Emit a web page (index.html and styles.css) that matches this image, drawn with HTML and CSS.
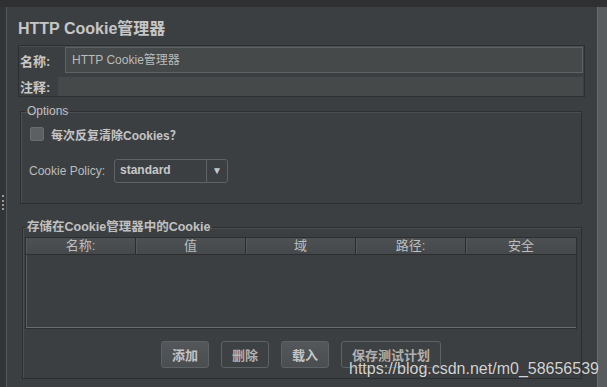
FILE: index.html
```html
<!DOCTYPE html>
<html lang="zh">
<head>
    <meta charset="UTF-8" />
    <title>HTTP Cookie管理器</title>
    <link rel="stylesheet" href="styles.css">
</head>
<body>

    <div class="top-bar"></div>

    <div class="workspace">
        <div class="side">
            <div class="grip"></div>
        </div>

        <div class="panel">
            <div class="title">HTTP Cookie管理器</div>

            <div class="name-box">
                <div class="row">
                    <span class="label label-name">名称:</span>
                    <div class="field field-name">HTTP Cookie管理器</div>
                </div>
                <div class="row">
                    <span class="label label-comment">注释:</span>
                    <div class="field field-comment"></div>
                </div>
            </div>

            <fieldset class="group options">
                <legend>Options</legend>
                <div class="check-row">
                    <span class="checkbox"></span>
                    <span class="check-text">每次反复清除Cookies？</span>
                </div>
                <div class="policy-row">
                    <span class="policy-label">Cookie Policy:</span>
                    <div class="combo">
                        <span class="combo-value">standard</span>
                        <span class="combo-arrow">▼</span>
                    </div>
                </div>
            </fieldset>

            <fieldset class="group cookies">
                <legend>存储在Cookie管理器中的Cookie</legend>
                <div class="table">
                    <div class="thead">
                        <div class="th">名称:</div>
                        <div class="th">值</div>
                        <div class="th">域</div>
                        <div class="th">路径:</div>
                        <div class="th">安全</div>
                    </div>
                    <div class="tbody"></div>
                </div>
                <div class="buttons">
                    <button class="btn">添加</button>
                    <button class="btn btn-flat">删除</button>
                    <button class="btn">载入</button>
                    <button class="btn btn-flat">保存测试计划</button>
                </div>
            </fieldset>
        </div>

        <div class="scroll"></div>
    </div>

    <div class="watermark">https://blog.csdn.net/m0_58656539</div>

</body>
</html>
```

FILE: styles.css
```css
html, body {
    margin: 0;
    height: 100%;
    overflow: hidden;
}

body {
    position: relative;
    background: #3c3f41;
    color: #bbbbbb;
    font-family: "Liberation Sans", "Noto Sans CJK SC", sans-serif;
    font-size: 12px;
}

.top-bar {
    height: 7px;
    background: #2e3031;
}

.workspace {
    display: flex;
    height: 380px;
}

.side {
    width: 6px;
    background: #323436;
    border-right: 1px solid #55585a;
}

.grip {
    margin-top: 188px;
    margin-left: 2px;
    height: 15px;
    border-left: 2px dotted #9a9a9a;
}

.panel {
    flex: 1;
    background: #3c3f41;
}

.scroll {
    width: 9px;
    background: #595c5e;
    border-left: 1px solid #6a6d6f;
}

/* title */

.title {
    margin: 12px 0 0 11px;
    font-size: 16px;
    line-height: 20px;
    font-weight: bold;
    color: #c6c6c6;
}

/* name / comment */

.name-box {
    margin: 6px 12px 0 11px;
    padding: 1px 1px 0 0;
    border: 1px solid #2c2e2f;
    box-shadow: inset 0 1px 0 #4a4d4f;
    display: flex;
    flex-direction: column;
    gap: 4px;
}

.row {
    display: flex;
    align-items: center;
}

.label {
    font-size: 13px;
    font-weight: bold;
    color: #c8c8c8;
    padding-left: 1px;
}

.label-name { width: 45px; }
.label-comment { width: 38px; }

.field {
    flex: 1;
    background: #45494a;
    box-sizing: border-box;
}

.field-name {
    height: 26px;
    line-height: 24px;
    padding-left: 6px;
    border: 1px solid #5f6264;
    color: #bbbbbb;
}

.field-comment {
    height: 19px;
}

/* groups */

.group {
    margin: 0;
    padding: 0;
    border: 1px solid #2c2e2f;
    box-shadow: inset 1px 1px 0 #4c4f51;
    min-width: 0;
}

.group legend {
    padding: 0 2px;
    line-height: 14px;
    color: #c0c0c0;
}

.options {
    margin: 7px 15px 0 13px;
    padding: 6px 0 20px 8px;
}

.options legend {
    margin-left: -4px;
    font-size: 12px;
}

.check-row {
    display: flex;
    align-items: center;
    height: 20px;
}

.checkbox {
    width: 12px;
    height: 12px;
    margin-left: 1px;
    background: #5d6062;
    border: 1px solid #6b6e70;
    border-radius: 2px;
}

.check-text {
    margin-left: 7px;
    font-weight: bold;
    color: #c4c4c4;
}

.policy-row {
    display: flex;
    align-items: center;
    margin-top: 15px;
}

.policy-label {
    width: 85px;
}

.combo {
    display: flex;
    width: 114px;
    height: 24px;
    box-sizing: border-box;
    border: 1px solid #606365;
    border-radius: 3px;
}

.combo-value {
    flex: 1;
    padding-left: 5px;
    line-height: 20px;
    font-weight: bold;
    color: #c8c8c8;
}

.combo-arrow {
    width: 20px;
    border-left: 1px solid #606365;
    text-align: center;
    line-height: 22px;
    font-size: 10px;
    color: #c8c8c8;
}

.cookies {
    margin: 15px 15px 0 15px;
    padding: 2px 4px 10px 2px;
}

.cookies legend {
    margin-left: 0;
    font-size: 12.5px;
    line-height: 16px;
    font-weight: bold;
}

/* table */

.table {
    border: 1px solid #2c2e2f;
}

.thead {
    display: grid;
    grid-template-columns: repeat(5, 1fr);
    height: 16px;
    background: linear-gradient(#4d5153, #45494b);
    border-bottom: 1px solid #2c2e2f;
}

.th {
    line-height: 16px;
    text-align: center;
    font-size: 13px;
    color: #bdbdbd;
    border-right: 1px solid #2a2c2d;
    box-shadow: inset 1px 0 0 #55595b;
}

.th:last-child {
    border-right: none;
}

.tbody {
    height: 72px;
    background: #3c3f41;
    border-left: 1px solid #5a5d5f;
    border-bottom: 1px solid #6a6d6f;
}

/* buttons */

.buttons {
    display: flex;
    justify-content: center;
    gap: 12px;
    margin-top: 12px;
}

.btn {
    height: 27px;
    padding: 0 10px;
    font-family: inherit;
    font-size: 13px;
    font-weight: bold;
    color: #c4c4c4;
    background: linear-gradient(#53575a, #4a4e50);
    border: 1px solid #5e6264;
    border-radius: 3px;
}

.btn-flat {
    background: #3e4143;
    color: #b0b0b0;
}

/* overlay text */

.watermark {
    position: absolute;
    left: 349px;
    top: 360px;
    font-size: 16px;
    line-height: 18px;
    color: #d4d4d4;
    text-shadow: 0 0 1px #2a2a2a;
}
```
